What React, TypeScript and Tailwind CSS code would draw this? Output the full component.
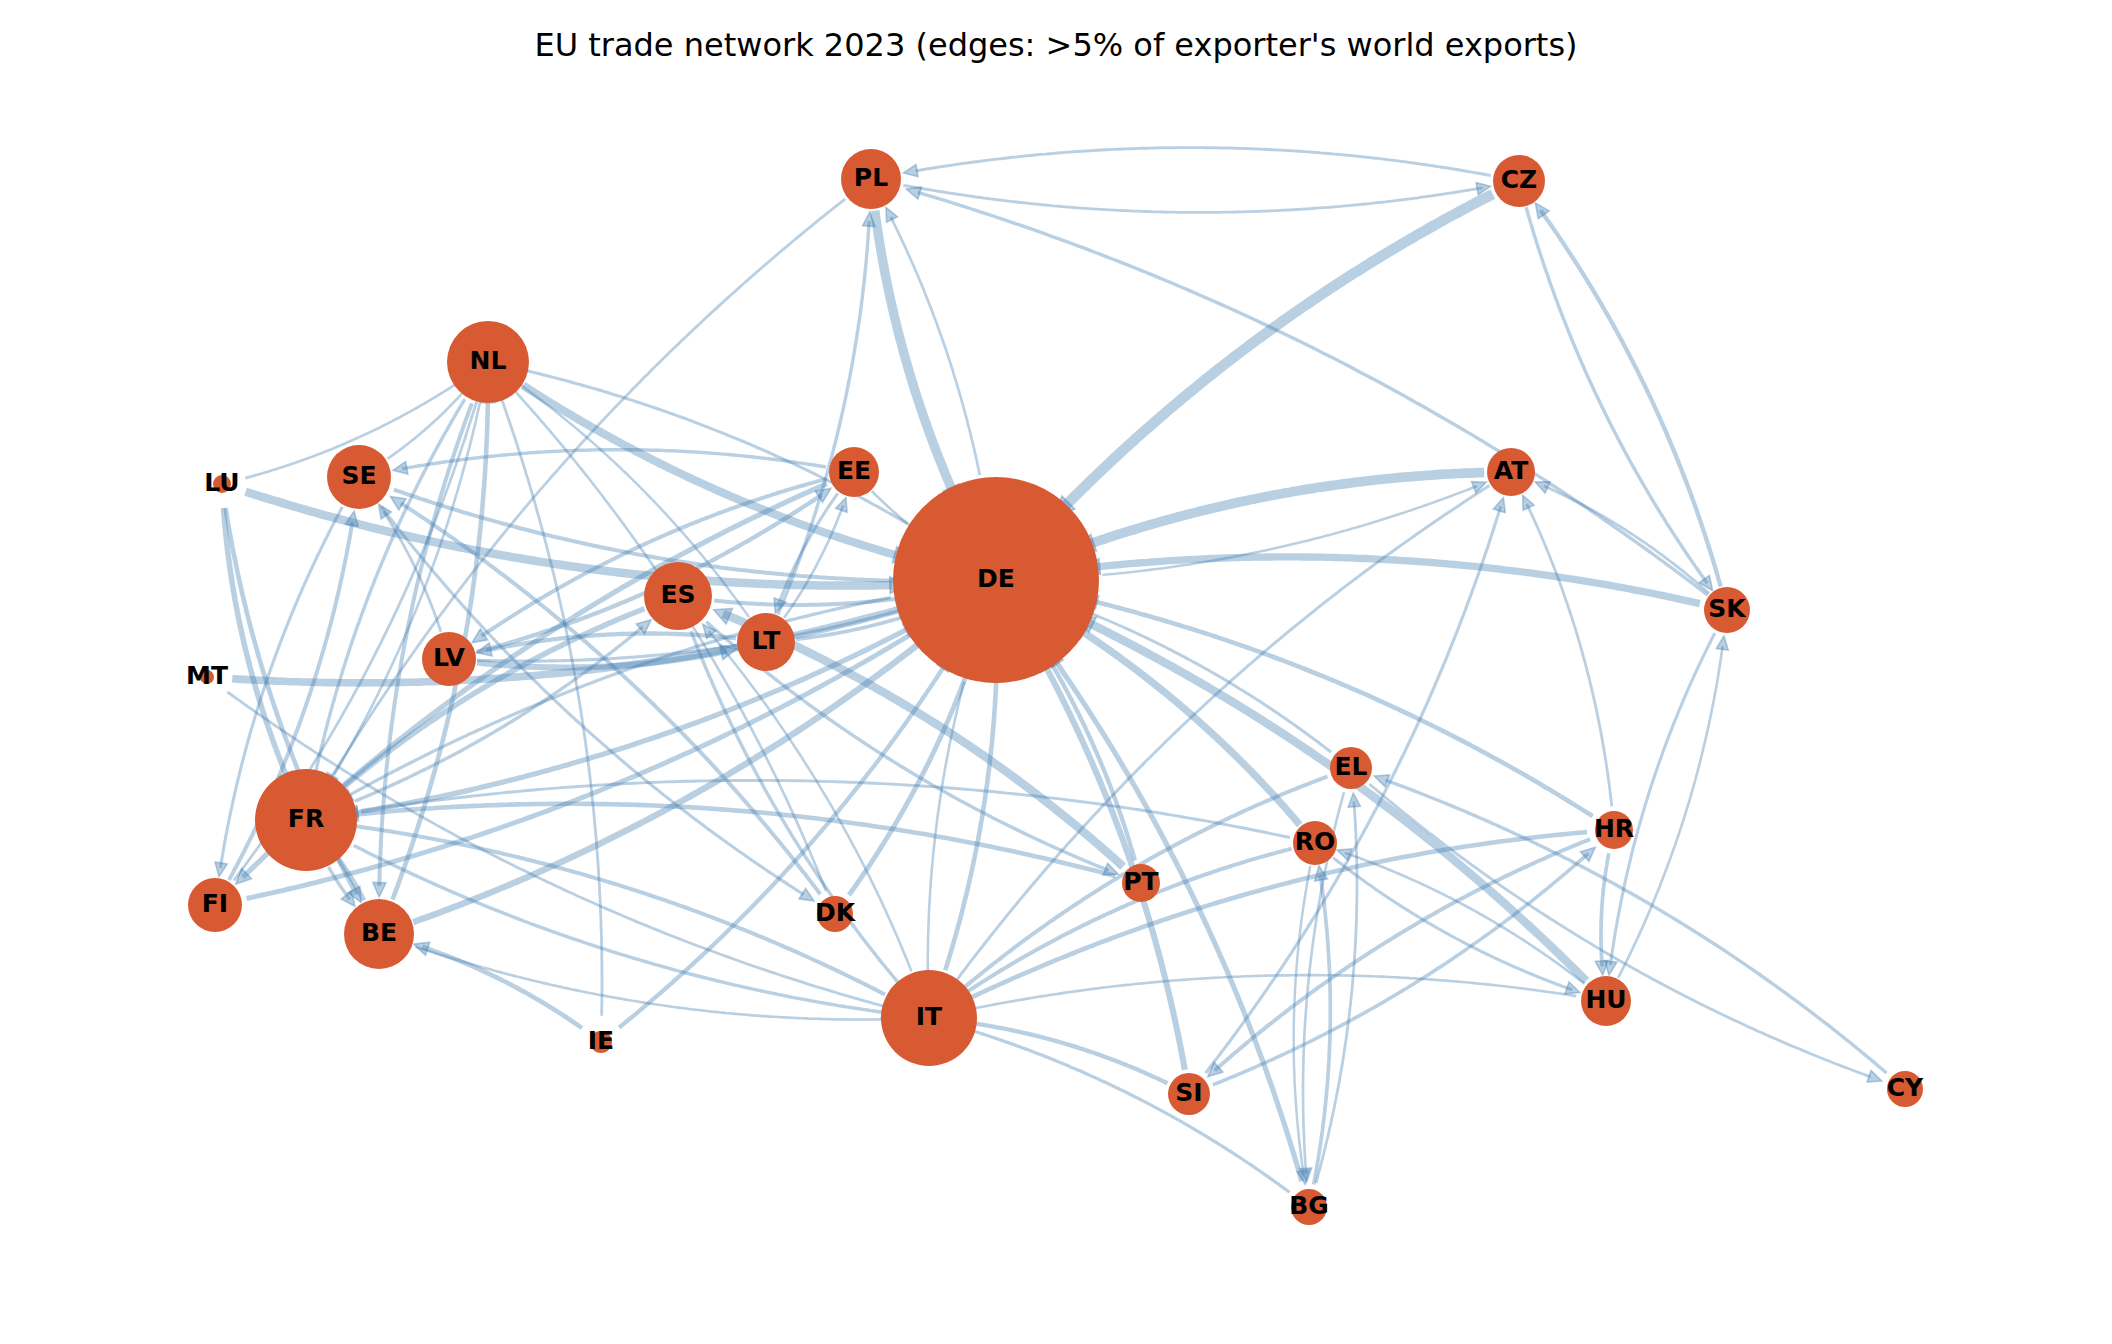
type GraphNode = { id: string; x: number; y: number; r: number };

const NODES: GraphNode[] = [
  { id: "PL", x: 871, y: 179, r: 30 },
  { id: "CZ", x: 1519, y: 181, r: 26 },
  { id: "NL", x: 488, y: 362, r: 41 },
  { id: "SE", x: 359, y: 477, r: 32 },
  { id: "LU", x: 222, y: 484, r: 9 },
  { id: "EE", x: 854, y: 472, r: 25 },
  { id: "AT", x: 1511, y: 472, r: 24 },
  { id: "DE", x: 996, y: 580, r: 103 },
  { id: "ES", x: 678, y: 596, r: 34 },
  { id: "LT", x: 766, y: 642, r: 29 },
  { id: "LV", x: 449, y: 659, r: 27 },
  { id: "SK", x: 1727, y: 610, r: 23 },
  { id: "MT", x: 207, y: 677, r: 7 },
  { id: "FR", x: 306, y: 820, r: 51 },
  { id: "FI", x: 215, y: 905, r: 27 },
  { id: "BE", x: 379, y: 934, r: 35 },
  { id: "IE", x: 601, y: 1042, r: 11 },
  { id: "DK", x: 835, y: 914, r: 18 },
  { id: "IT", x: 929, y: 1018, r: 48 },
  { id: "EL", x: 1351, y: 768, r: 21 },
  { id: "RO", x: 1315, y: 843, r: 22 },
  { id: "PT", x: 1141, y: 883, r: 19 },
  { id: "HR", x: 1614, y: 830, r: 19 },
  { id: "HU", x: 1606, y: 1001, r: 25 },
  { id: "SI", x: 1189, y: 1094, r: 21 },
  { id: "BG", x: 1309, y: 1207, r: 18 },
  { id: "CY", x: 1905, y: 1089, r: 18 },
];

// exporter -> importer, share of exporter's world exports (%)
const EDGES: [string, string, number][] = [
  ["AT", "DE", 29], ["AT", "IT", 6.5],
  ["BE", "DE", 18], ["BE", "FR", 14], ["BE", "NL", 12], ["BE", "IT", 5.5],
  ["BG", "DE", 14], ["BG", "RO", 9], ["BG", "IT", 7.5], ["BG", "EL", 6],
  ["CY", "EL", 8],
  ["CZ", "DE", 32], ["CZ", "SK", 8], ["CZ", "PL", 6.5],
  ["DE", "FR", 7.5], ["DE", "NL", 6.7], ["DE", "PL", 5.6], ["DE", "IT", 5.2], ["DE", "AT", 5.1],
  ["DK", "DE", 13], ["DK", "SE", 10], ["DK", "NL", 5.5],
  ["EE", "FI", 14], ["EE", "LV", 10], ["EE", "SE", 8], ["EE", "LT", 7], ["EE", "DE", 5.5],
  ["EL", "IT", 10], ["EL", "DE", 6.5], ["EL", "CY", 6], ["EL", "BG", 5.5],
  ["ES", "FR", 15], ["ES", "DE", 10], ["ES", "PT", 8], ["ES", "IT", 8],
  ["FI", "DE", 13], ["FI", "SE", 10], ["FI", "NL", 6],
  ["FR", "DE", 14], ["FR", "IT", 8], ["FR", "BE", 8], ["FR", "ES", 8], ["FR", "NL", 5.5],
  ["HR", "IT", 12], ["HR", "DE", 12], ["HR", "SI", 10], ["HR", "HU", 9], ["HR", "AT", 6],
  ["HU", "DE", 25], ["HU", "IT", 5.5], ["HU", "RO", 5.5], ["HU", "SK", 5.5],
  ["IE", "DE", 11], ["IE", "BE", 12], ["IE", "NL", 6],
  ["IT", "DE", 12], ["IT", "FR", 10], ["IT", "ES", 5.2],
  ["LT", "LV", 11], ["LT", "DE", 9], ["LT", "PL", 8], ["LT", "EE", 5.5], ["LT", "NL", 5],
  ["LU", "DE", 25], ["LU", "FR", 15], ["LU", "BE", 12], ["LU", "NL", 5.5],
  ["LV", "LT", 17], ["LV", "EE", 11], ["LV", "DE", 7], ["LV", "SE", 6],
  ["MT", "DE", 22], ["MT", "IT", 6],
  ["NL", "DE", 24], ["NL", "BE", 10], ["NL", "FR", 8],
  ["PL", "DE", 28], ["PL", "CZ", 6], ["PL", "FR", 6],
  ["PT", "ES", 25], ["PT", "FR", 12], ["PT", "DE", 11],
  ["RO", "DE", 21], ["RO", "IT", 10], ["RO", "HU", 7], ["RO", "FR", 6.5], ["RO", "BG", 5],
  ["SE", "DE", 10], ["SE", "FI", 7], ["SE", "DK", 7], ["SE", "NL", 5.5],
  ["SI", "DE", 17], ["SI", "IT", 11], ["SI", "HR", 8.5], ["SI", "AT", 7],
  ["SK", "DE", 21], ["SK", "CZ", 11], ["SK", "PL", 8], ["SK", "HU", 7], ["SK", "AT", 6],
];

const byId = Object.fromEntries(NODES.map((n) => [n.id, n]));

function buildEdge(a: GraphNode, b: GraphNode, share: number) {
  const w = 1 + 0.3 * share;
  const dx = b.x - a.x;
  const dy = b.y - a.y;
  // arc3, rad = 0.1
  const cx = (a.x + b.x) / 2 - 0.1 * dy;
  const cy = (a.y + b.y) / 2 + 0.1 * dx;
  const sa = Math.max(a.r, 22) + 1;
  // big nodes swallow the arrow head
  const sb = b.r > 38 ? b.r - 18 : Math.max(b.r, 22) + 1;

  const pts: [number, number][] = [];
  for (let i = 0; i <= 160; i++) {
    const t = i / 160;
    const u = 1 - t;
    const x = u * u * a.x + 2 * u * t * cx + t * t * b.x;
    const y = u * u * a.y + 2 * u * t * cy + t * t * b.y;
    if (Math.hypot(x - a.x, y - a.y) >= sa && Math.hypot(x - b.x, y - b.y) >= sb) {
      pts.push([x, y]);
    }
  }

  const tip = pts[pts.length - 1];
  const back = pts[Math.max(0, pts.length - 6)];
  let ux = tip[0] - back[0];
  let uy = tip[1] - back[1];
  const len = Math.hypot(ux, uy) || 1;
  ux /= len;
  uy /= len;

  const headLen = 12 + 0.6 * w;
  const headHalf = 5 + 0.4 * w;
  const baseX = tip[0] - ux * headLen;
  const baseY = tip[1] - uy * headLen;

  // stop the shaft a bit inside the head
  const cut = headLen * 0.6;
  const shaft = pts.filter(([x, y]) => Math.hypot(x - tip[0], y - tip[1]) >= cut);

  const d = shaft.map(([x, y], i) => `${i ? "L" : "M"}${x.toFixed(1)} ${y.toFixed(1)}`).join(" ");
  const head = [
    [tip[0], tip[1]],
    [baseX - uy * headHalf, baseY + ux * headHalf],
    [baseX + uy * headHalf, baseY - ux * headHalf],
  ]
    .map(([x, y]) => `${x.toFixed(1)},${y.toFixed(1)}`)
    .join(" ");

  return { d, head, w };
}

export default function App() {
  const edges = EDGES.map(([s, t, share]) => ({
    key: `${s}-${t}`,
    ...buildEdge(byId[s], byId[t], share),
  }));

  return (
    <div className="flex h-[1344px] w-[2112px] flex-col bg-white">
      <div className="h-[70px] shrink-0 pt-[29px] text-center font-['DejaVu_Sans',sans-serif] text-[32px] leading-[32px] text-black">
        EU trade network 2023 (edges: &gt;5% of exporter&apos;s world exports)
      </div>

      <svg width={2112} height={1274} viewBox="0 70 2112 1274" className="block">
        <g fill="none" stroke="#4682b4" strokeOpacity={0.38}>
          {edges.map((e) => (
            <g key={e.key}>
              <path d={e.d} strokeWidth={e.w} />
              <polygon
                points={e.head}
                fill="#4682b4"
                fillOpacity={0.38}
                strokeWidth={1.6}
                strokeLinejoin="miter"
              />
            </g>
          ))}
        </g>

        <g fill="#d85a32">
          {NODES.map((n) => (
            <circle key={n.id} cx={n.x} cy={n.y} r={n.r} />
          ))}
        </g>

        <g
          fontFamily="'DejaVu Sans', 'Liberation Sans', sans-serif"
          fontWeight={700}
          fontSize={25}
          fill="#000"
          textAnchor="middle"
        >
          {NODES.map((n) => (
            <text key={n.id} x={n.x} y={n.y + 7}>
              {n.id}
            </text>
          ))}
        </g>
      </svg>
    </div>
  );
}
